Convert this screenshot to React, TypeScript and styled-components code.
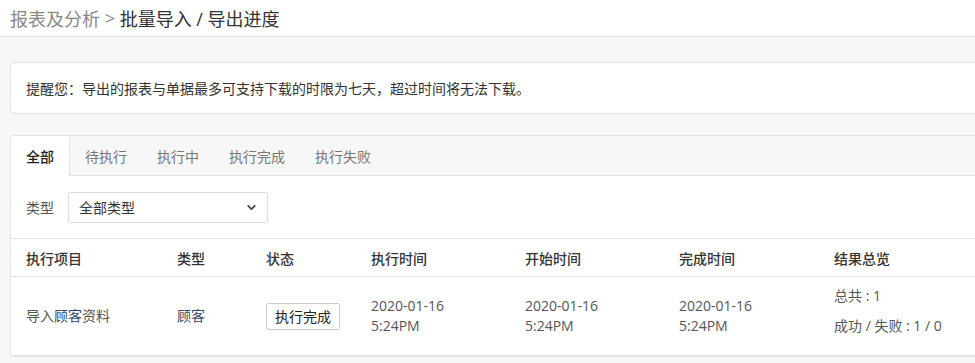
import styled, { createGlobalStyle } from 'styled-components';

const GlobalStyle = createGlobalStyle`
  html, body {
    margin: 0;
    padding: 0;
    background: #f7f7f7;
  }
  body {
    font-family: "Open Sans", "Noto Sans CJK SC", sans-serif;
    font-size: 14px;
    color: #555;
  }
`;

const ChevronDown = () => (
  <svg width="13" height="13" viewBox="0 0 24 24" fill="none" stroke="#444" strokeWidth="3.4" strokeLinecap="round" strokeLinejoin="round">
    <polyline points="6 9 12 15 18 9"></polyline>
  </svg>
);

const Page = styled.div`
  width: 975px;
  height: 363px;
  overflow: hidden;
`;

const Header = styled.header`
  height: 37px;
  background: #fff;
  border-bottom: 1px solid #e6e6e6;
  display: flex;
  align-items: center;
  padding: 0 10px;
  box-sizing: border-box;
  font-size: 18px;
  color: #333;
`;

const Crumb = styled.span`
  color: #888;
`;

const Content = styled.main`
  padding: 25px 0 0 10px;
  display: flex;
  flex-direction: column;
  gap: 21px;
`;

const Alert = styled.div`
  height: 52px;
  margin-right: -10px;
  background: #fff;
  border: 1px solid #e3e3e3;
  border-radius: 4px;
  display: flex;
  align-items: center;
  padding: 0 15px;
  color: #333;
  box-sizing: border-box;
`;

const Card = styled.section`
  margin-right: -10px;
  background: #fff;
  border: 1px solid #e3e3e3;
  border-radius: 4px;
  overflow: hidden;
`;

const Tabs = styled.nav`
  display: flex;
  height: 39px;
  background: #f7f7f7;
  border-bottom: 1px solid #e3e3e3;
`;

const Tab = styled.div<{ $active?: boolean }>`
  padding: 0 15px;
  display: flex;
  align-items: center;
  color: ${(p) => (p.$active ? '#222' : '#777')};
  font-weight: ${(p) => (p.$active ? 500 : 400)};
  background: ${(p) => (p.$active ? '#fff' : 'transparent')};
  border-right: ${(p) => (p.$active ? '1px solid #e3e3e3' : 'none')};
  margin-bottom: ${(p) => (p.$active ? '-1px' : '0')};
`;

const FilterRow = styled.div`
  display: flex;
  align-items: center;
  gap: 14px;
  padding: 0 15px;
  height: 63px;
  box-sizing: border-box;
  border-bottom: 1px solid #e3e3e3;
`;

const FilterLabel = styled.span`
  color: #555;
`;

const Select = styled.div`
  width: 200px;
  height: 31px;
  box-sizing: border-box;
  border: 1px solid #ddd;
  border-radius: 2px;
  display: flex;
  align-items: center;
  justify-content: space-between;
  padding: 0 9px 0 10px;
  color: #333;
`;

const Table = styled.table`
  border-collapse: collapse;
  width: 100%;
  table-layout: fixed;
`;

const Th = styled.th<{ $w?: number }>`
  width: ${(p) => (p.$w ? `${p.$w}px` : 'auto')};
  height: 37px;
  text-align: left;
  font-weight: 500;
  color: #333;
  padding: 0 0 0 15px;
  border-bottom: 1px solid #e3e3e3;
`;

const Td = styled.td`
  height: 78px;
  padding: 0 0 0 15px;
  vertical-align: middle;
  color: #555;
  line-height: 20px;
  border-bottom: 1px solid #e3e3e3;
  white-space: nowrap;
`;

const Link = styled.span`
  color: #2f4a68;
`;

const StatusBadge = styled.span`
  display: inline-block;
  padding: 3px 8px;
  border: 1px solid #ccc;
  border-radius: 2px;
  color: #222;
  line-height: 19px;
`;

const ResultLines = styled.div`
  display: flex;
  flex-direction: column;
  gap: 10px;
  margin-bottom: 10px;
`;

const columns = [
  { label: '执行项目', w: 136 },
  { label: '类型', w: 74 },
  { label: '状态', w: 90 },
  { label: '执行时间', w: 139 },
  { label: '开始时间', w: 139 },
  { label: '完成时间', w: 140 },
  { label: '结果总览' },
];

const tabs = ['全部', '待执行', '执行中', '执行完成', '执行失败'];

export default function App() {
  return (
    <Page>
      <GlobalStyle />
      <Header>
        <Crumb>报表及分析</Crumb>
        <Crumb>&nbsp;&gt;&nbsp;</Crumb>
        <span>批量导入 / 导出进度</span>
      </Header>
      <Content>
        <Alert>提醒您：导出的报表与单据最多可支持下载的时限为七天，超过时间将无法下载。</Alert>
        <Card>
          <Tabs>
            {tabs.map((t, i) => (
              <Tab key={t} $active={i === 0}>{t}</Tab>
            ))}
          </Tabs>
          <FilterRow>
            <FilterLabel>类型</FilterLabel>
            <Select>
              <span>全部类型</span>
              <ChevronDown />
            </Select>
          </FilterRow>
          <Table>
            <thead>
              <tr>
                {columns.map((c) => (
                  <Th key={c.label} $w={c.w}>{c.label}</Th>
                ))}
              </tr>
            </thead>
            <tbody>
              <tr>
                <Td>导入<Link>顾客</Link>资料</Td>
                <Td><Link>顾客</Link></Td>
                <Td><StatusBadge>执行完成</StatusBadge></Td>
                <Td>2020-01-16<br />5:24PM</Td>
                <Td>2020-01-16<br />5:24PM</Td>
                <Td>2020-01-16<br />5:24PM</Td>
                <Td>
                  <ResultLines>
                    <span>总共 : 1</span>
                    <span>成功 / 失败 : 1 / 0</span>
                  </ResultLines>
                </Td>
              </tr>
            </tbody>
          </Table>
        </Card>
      </Content>
    </Page>
  );
}
